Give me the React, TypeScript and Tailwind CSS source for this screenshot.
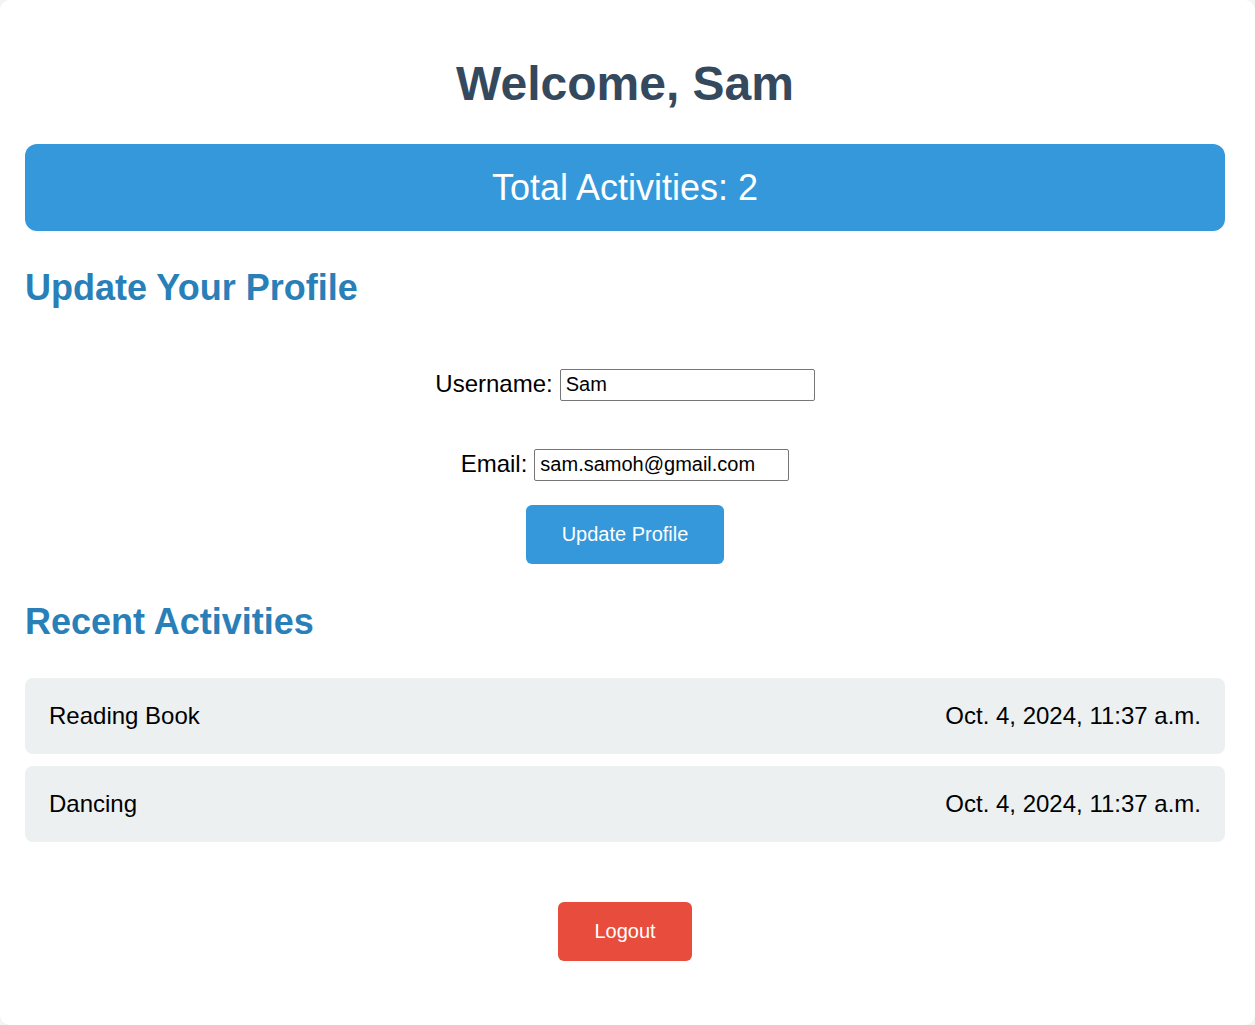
export default function App() {
  const activities = [
    { name: "Reading Book", time: "Oct. 4, 2024, 11:37 a.m." },
    { name: "Dancing", time: "Oct. 4, 2024, 11:37 a.m." },
  ];

  return (
    <div className="min-h-[1025px] bg-[#f4f4f4] font-['Liberation_Sans',Arial,sans-serif]">
      <div className="min-h-[1025px] rounded-[10px] bg-white pl-[25px] pr-[30px] pb-[64px]">
        {/* Header */}
        <h1 className="pt-[56px] text-center text-[48px] font-bold leading-[55px] text-[#34495e]">
          Welcome, Sam
        </h1>

        <div className="mt-[33px] rounded-[12px] bg-[#3498db] py-[23px] text-center text-[36px] leading-[41px] text-white">
          Total Activities: 2
        </div>

        {/* Profile form */}
        <h2 className="mt-[36px] text-[36px] font-bold leading-[41px] text-[#2980b9]">
          Update Your Profile
        </h2>

        <form className="flex flex-col items-center" onSubmit={(e) => e.preventDefault()}>
          <div className="mt-[57px] flex items-baseline justify-center gap-[7px] text-[24px] text-black">
            <label htmlFor="username" className="translate-y-[1px]">Username:</label>
            <input
              id="username"
              defaultValue="Sam"
              className="h-[32px] w-[255px] rounded-[2px] border border-[#767676] pl-[5px] text-[20px] text-black outline-none"
            />
          </div>
          <div className="mt-[44px] flex items-baseline justify-center gap-[7px] text-[24px] text-black">
            <label htmlFor="email" className="translate-y-[1px]">Email:</label>
            <input
              id="email"
              defaultValue="sam.samoh@gmail.com"
              className="h-[32px] w-[255px] rounded-[2px] border border-[#767676] pl-[5px] text-[20px] text-black outline-none"
            />
          </div>
          <button
            type="submit"
            className="mt-[24px] rounded-[6px] bg-[#3498db] px-[36px] py-[18px] text-[20px] leading-[23px] text-white"
          >
            Update Profile
          </button>
        </form>

        {/* Activities */}
        <h2 className="mt-[37px] text-[36px] font-bold leading-[41px] text-[#2980b9]">
          Recent Activities
        </h2>

        <ul className="mt-[36px] flex flex-col gap-[12px]">
          {activities.map((a, i) => (
            <li
              key={i}
              className="flex items-center justify-between rounded-[8px] bg-[#ecf0f1] px-[24px] py-[24px] text-[24px] leading-[28px] text-black"
            >
              <span>{a.name}</span>
              <span>{a.time}</span>
            </li>
          ))}
        </ul>

        <div className="mt-[60px] flex justify-center">
          <button className="rounded-[6px] bg-[#e74c3c] px-[36px] py-[18px] text-[20px] leading-[23px] text-white">
            Logout
          </button>
        </div>
      </div>
    </div>
  );
}
